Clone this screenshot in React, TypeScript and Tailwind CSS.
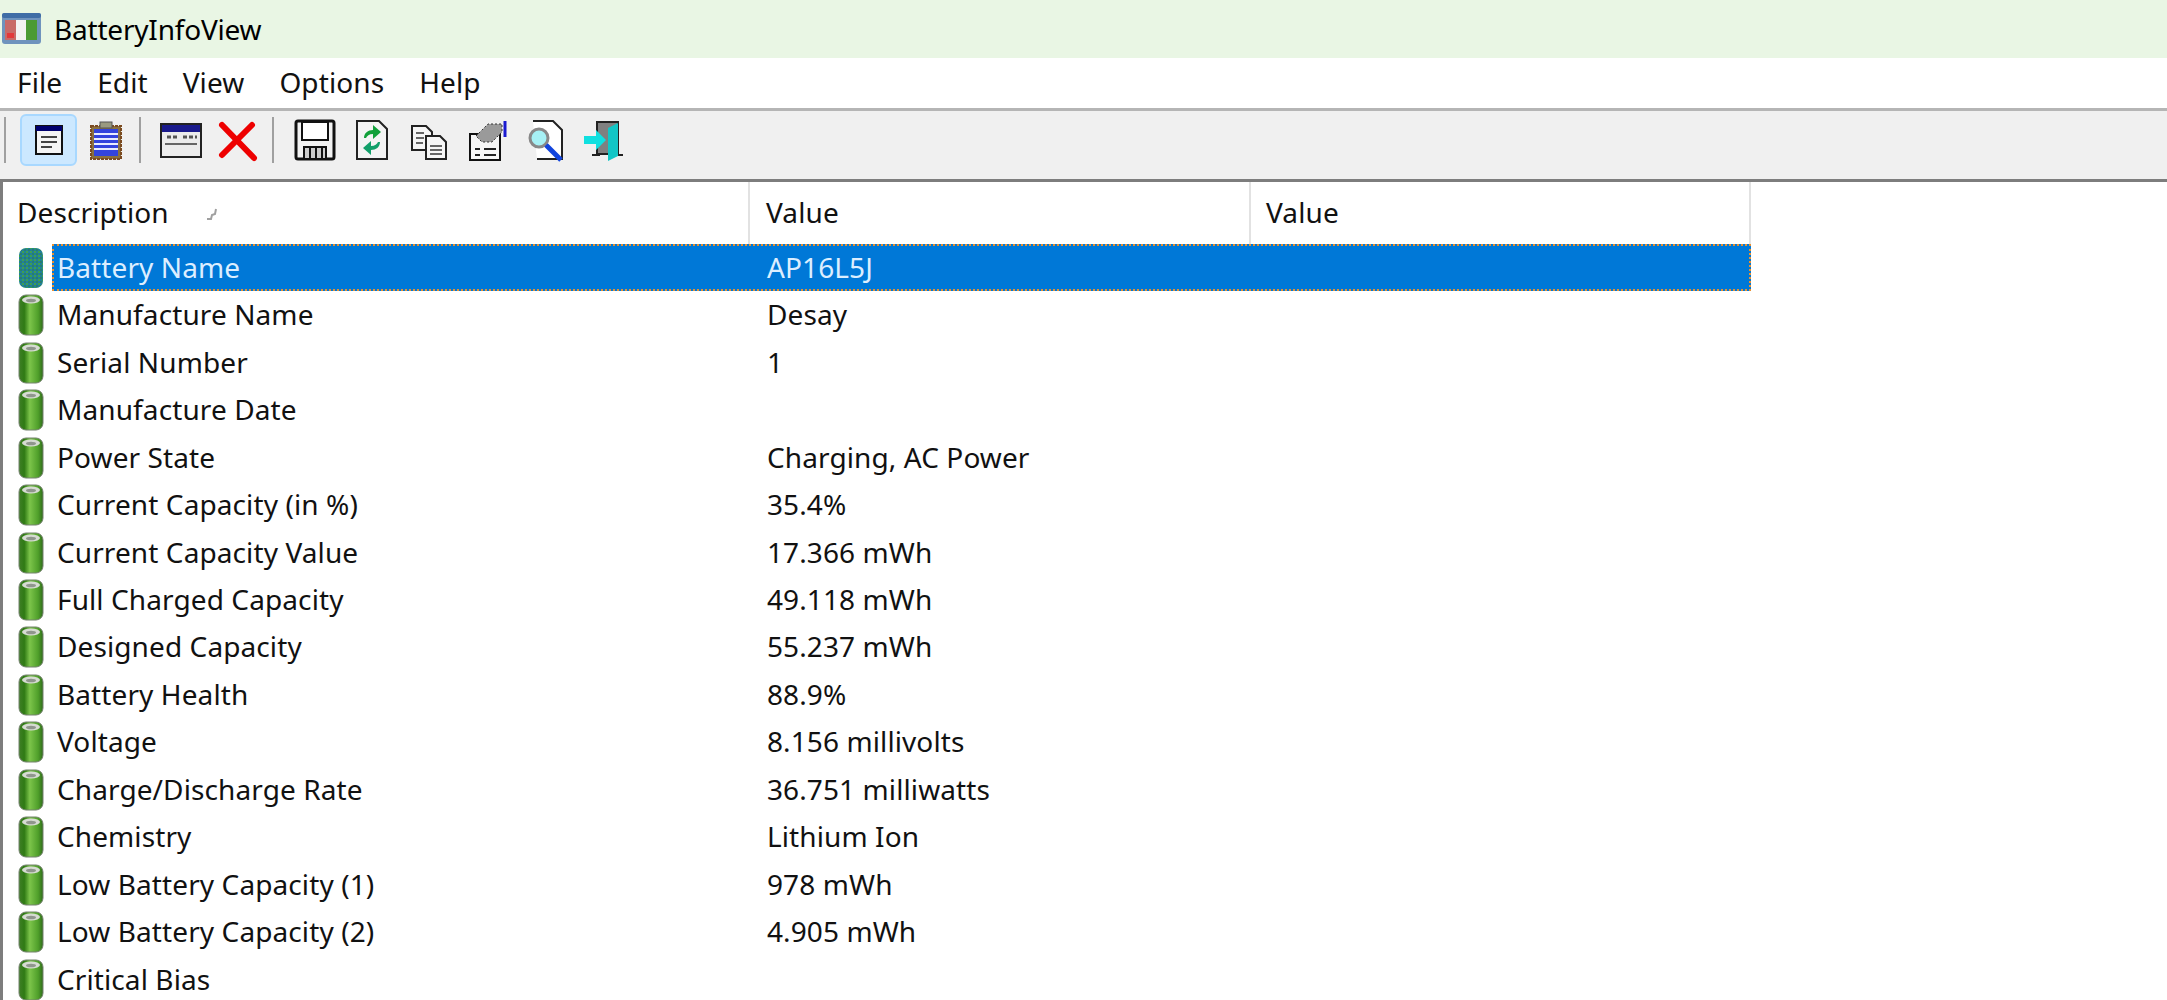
import React from 'react';

const rows: [string, string][] = [
  ['Battery Name', 'AP16L5J'],
  ['Manufacture Name', 'Desay'],
  ['Serial Number', '1'],
  ['Manufacture Date', ''],
  ['Power State', 'Charging, AC Power'],
  ['Current Capacity (in %)', '35.4%'],
  ['Current Capacity Value', '17.366 mWh'],
  ['Full Charged Capacity', '49.118 mWh'],
  ['Designed Capacity', '55.237 mWh'],
  ['Battery Health', '88.9%'],
  ['Voltage', '8.156 millivolts'],
  ['Charge/Discharge Rate', '36.751 milliwatts'],
  ['Chemistry', 'Lithium Ion'],
  ['Low Battery Capacity (1)', '978 mWh'],
  ['Low Battery Capacity (2)', '4.905 mWh'],
  ['Critical Bias', ''],
];

function AppIcon() {
  return (
    <svg width="42" height="34" viewBox="0 0 42 34" className="shrink-0">
      <rect x="1" y="1" width="39" height="31" rx="3" fill="#6f93bd" />
      <rect x="1" y="1" width="39" height="5" rx="2" fill="#3f6da6" />
      <rect x="4" y="8" width="11" height="20" fill="#c86a68" />
      <rect x="15" y="8" width="10" height="20" fill="#f2f2f2" />
      <rect x="25" y="8" width="11" height="20" fill="#4b9a35" />
      <rect x="6" y="21" width="7" height="5" fill="#e2373a" />
    </svg>
  );
}

function BatteryIcon({ selected }: { selected?: boolean }) {
  if (selected) {
    return (
      <svg width="26" height="42" viewBox="0 0 26 42">
        <defs>
          <pattern id="dither" width="4" height="4" patternUnits="userSpaceOnUse">
            <rect width="4" height="4" fill="#1f7f9c" />
            <rect width="2" height="2" fill="#3f9f50" />
            <rect x="2" y="2" width="2" height="2" fill="#2a7f6a" />
          </pattern>
        </defs>
        <rect x="1" y="1" width="24" height="40" rx="7" fill="url(#dither)" />
      </svg>
    );
  }
  return (
    <svg width="26" height="42" viewBox="0 0 26 42">
      <defs>
        <linearGradient id="cell" x1="0" x2="1" y1="0" y2="0">
          <stop offset="0" stopColor="#3f7f26" />
          <stop offset="0.22" stopColor="#2f7a14" />
          <stop offset="0.45" stopColor="#7cc44a" />
          <stop offset="0.8" stopColor="#4f9f2a" />
          <stop offset="1" stopColor="#2f6b1a" />
        </linearGradient>
      </defs>
      <rect x="1" y="1" width="24" height="40" rx="7" fill="url(#cell)" stroke="#75826f" strokeWidth="1" />
      <ellipse cx="13" cy="6" rx="9" ry="3.5" fill="#d6dbd2" />
      <ellipse cx="13" cy="6.5" rx="5" ry="1.8" fill="#8f968c" />
    </svg>
  );
}

function Separator() {
  return <div className="w-[2px] h-[46px] bg-[#a0a0a0] shrink-0" />;
}

function ToolIcon({ children, active }: { children: React.ReactNode; active?: boolean }) {
  return (
    <div
      className={
        'w-[57px] h-[52px] shrink-0 flex items-center justify-center rounded-md border-2 ' +
        (active ? 'bg-[#cce8ff] border-[#a8d8ff]' : 'border-transparent')
      }
    >
      <svg width="44" height="44" viewBox="0 0 44 44">
        {children}
      </svg>
    </div>
  );
}

export default function App() {
  return (
    <div className="w-[2167px] h-[1000px] overflow-hidden bg-white text-[#111] font-['Noto_Sans',sans-serif]">
      <div className="h-[58px] bg-[#e9f6e4] flex items-center pl-[1px] gap-[11px] text-black text-[28px]">
        <AppIcon />
        <span className="tracking-[-0.2px]">BatteryInfoView</span>
      </div>

      <div className="h-[50px] flex items-center pl-[17px] pb-[2px] text-[28px] gap-[35px] tracking-[0.1px]">
        <span>File</span>
        <span>Edit</span>
        <span>View</span>
        <span>Options</span>
        <span>Help</span>
      </div>

      <div className="h-[74px] bg-[#f0f0f0] border-t-[3px] border-b-[3px] border-t-[#b5b5b5] border-b-[#7d7d7d] flex items-center pl-[4px] pb-[11px]">
        <Separator />
        <div className="w-[14px]" />
        <ToolIcon active>
          <rect x="9" y="8" width="26" height="28" fill="#f4f4f4" stroke="#111" strokeWidth="2" />
          <rect x="9" y="8" width="26" height="5" fill="#00006e" />
          <path d="M14 19h16M14 24h16M14 29h11" stroke="#444" strokeWidth="2" />
        </ToolIcon>
        <ToolIcon>
          <rect x="7" y="8" width="30" height="33" fill="#8a7040" stroke="#7b4a20" strokeWidth="2" strokeDasharray="3 1" />
          <rect x="10" y="11" width="24" height="27" fill="#3344dd" />
          <path d="M10 16h24M10 21h24M10 26h24M10 31h24" stroke="#e8ecff" strokeWidth="2" />
          <rect x="16" y="4" width="12" height="6" fill="#9a9a80" stroke="#555" strokeWidth="1" />
        </ToolIcon>
        <div className="w-[5px]" />
        <Separator />
        <div className="w-[11px]" />
        <ToolIcon>
          <rect x="2" y="6" width="40" height="33" fill="#ececec" stroke="#222" strokeWidth="2" />
          <rect x="3" y="7" width="38" height="7" fill="#1a1a8c" />
          <path d="M8 19h10M24 19h14" stroke="#555" strokeWidth="3" strokeDasharray="4 2" />
          <path d="M6 26h32" stroke="#666" strokeWidth="2" />
        </ToolIcon>
        <ToolIcon>
          <path d="M6 7 L38 40 M36 7 L6 37" stroke="#ee0000" strokeWidth="6" strokeLinecap="round" />
        </ToolIcon>
        <div className="w-[6px]" />
        <Separator />
        <div className="w-[12px]" />
        <ToolIcon>
          <rect x="3" y="3" width="38" height="38" rx="2" fill="#f2f2f2" stroke="#111" strokeWidth="3" />
          <rect x="9" y="4" width="26" height="18" fill="#fff" stroke="#111" strokeWidth="2" />
          <rect x="11" y="29" width="22" height="12" fill="#ccc" stroke="#111" strokeWidth="2" />
          <path d="M17 30v10M23 30v10M29 30v10" stroke="#111" strokeWidth="2" />
        </ToolIcon>
        <ToolIcon>
          <path d="M7 3h22l8 8v30H7Z" fill="#f4f4f4" stroke="#222" strokeWidth="2" />
          <path d="M14 20c0-5 4-8 9-8v-5l8 7-8 7v-5c-4 0-6 2-7 4Z" fill="#12a03a" />
          <path d="M30 24c0 5-4 8-9 8v5l-8-7 8-7v5c4 0 6-2 7-4Z" fill="#12a06a" />
        </ToolIcon>
        <ToolIcon>
          <path d="M5 8h14l6 6v18H5Z" fill="#f6f6f6" stroke="#222" strokeWidth="2" />
          <path d="M19 18h14l6 6v17H19Z" fill="#f6f6f6" stroke="#222" strokeWidth="2" />
          <path d="M9 15h8M9 20h8M9 25h7M23 28h12M23 32h12M23 36h12" stroke="#666" strokeWidth="2" />
        </ToolIcon>
        <div className="w-[2px]" />
        <ToolIcon>
          <rect x="4" y="16" width="30" height="26" fill="#f6f6f6" stroke="#111" strokeWidth="2" />
          <path d="M10 18 L22 6 L36 6 L36 14 L26 24 L16 24 Z" fill="#9a9a9a" stroke="#333" strokeWidth="1" strokeDasharray="2 2" />
          <path d="M39 3v16" stroke="#1a1ad0" strokeWidth="3" />
          <path d="M9 31h5M18 31h12M9 37h5M18 37h12" stroke="#222" strokeWidth="2" />
        </ToolIcon>
        <div className="w-[2px]" />
        <ToolIcon>
          <path d="M8 3h20l9 9v29H12" fill="#fff" stroke="#222" strokeWidth="2" />
          <circle cx="14" cy="20" r="9" fill="#a6f0f4" stroke="#888" strokeWidth="3" />
          <path d="M21 27 L36 42" stroke="#1144dd" strokeWidth="5" />
        </ToolIcon>
        <ToolIcon>
          <rect x="15" y="4" width="21" height="32" fill="#808080" stroke="#222" strokeWidth="2" />
          <path d="M26 10 L36 5 V38 L26 43 Z" fill="#12c6c6" />
          <path d="M2 18h12v-6l10 10-10 10v-6H2Z" fill="#10e0e0" />
          <path d="M10 37h8M36 37h5" stroke="#222" strokeWidth="2" />
        </ToolIcon>
      </div>

      <div className="border-l-[3px] border-[#7d7d7d] h-[818px] overflow-hidden">
        <div className="w-[1748px] h-[62px] flex text-[28px] tracking-[0.1px]">
          <div className="w-[747px] pb-[2px] border-r-2 border-[#e2e2e2] flex items-center pl-[14px]">
            <span>Description</span>
            <svg width="14" height="14" viewBox="0 0 14 14" className="ml-[36px] mt-[4px]">
              <path d="M2 12h4l1-4 3-1 1-5" fill="none" stroke="#a0a0a0" strokeWidth="2" />
            </svg>
          </div>
          <div className="w-[501px] pb-[2px] border-r-2 border-[#e2e2e2] flex items-center pl-[16px]">Value</div>
          <div className="w-[500px] pb-[2px] border-r-2 border-[#e2e2e2] flex items-center pl-[15px]">Value</div>
        </div>

        {rows.map(([name, value], i) => (
          <div key={name} className="w-[1748px] h-[47.47px] flex items-center text-[28px] tracking-[0.1px]">
            <div className="w-[49px] pl-[15px] shrink-0 flex items-center">
              <BatteryIcon selected={i === 0} />
            </div>
            <div
              className={
                'flex-1 flex items-center h-full pb-[2px] ' +
                (i === 0 ? 'bg-[#0078d7] text-[#dceeff] border-2 border-dotted border-[#e89030]' : '')
              }
            >
              <span className={'shrink-0 ' + (i === 0 ? 'w-[713px] pl-[3px]' : 'w-[715px] pl-[5px]')}>{name}</span>
              <span>{value}</span>
            </div>
          </div>
        ))}
      </div>
    </div>
  );
}
